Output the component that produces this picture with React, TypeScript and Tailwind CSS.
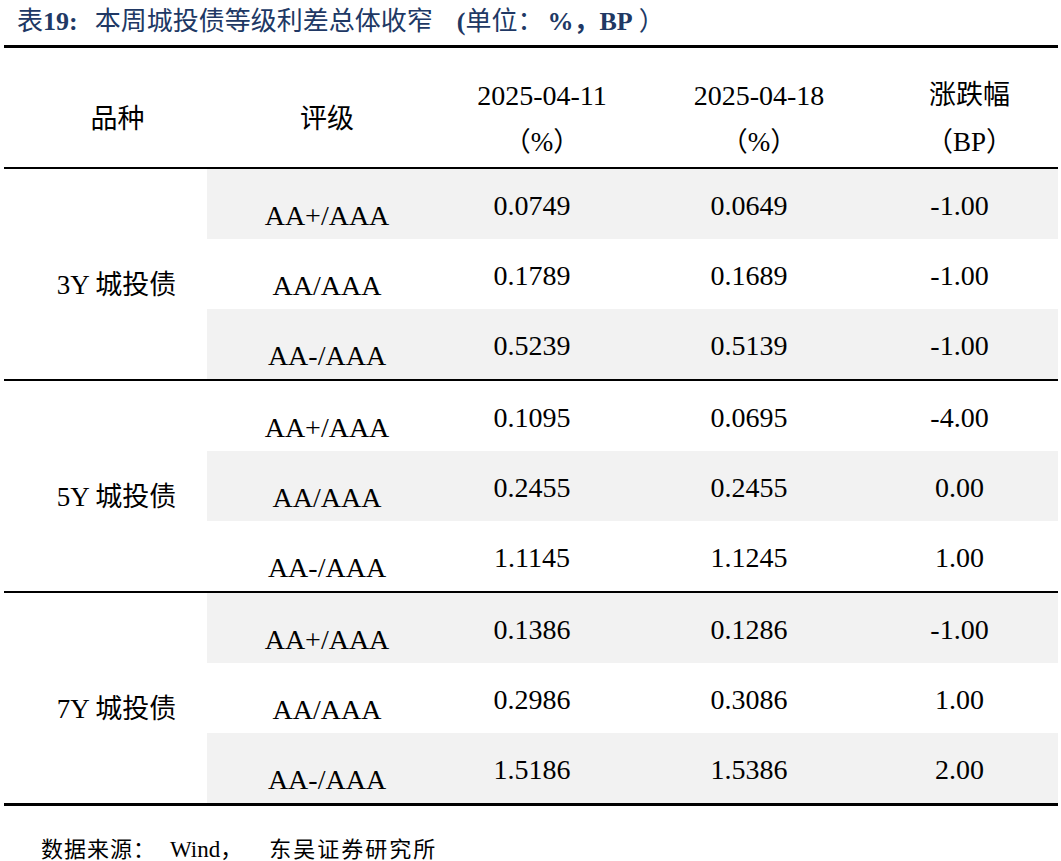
const FONT = "font-['Liberation_Serif','Noto_Sans_CJK_SC',serif]";

interface Row {
  grade: string;
  prev: string;
  curr: string;
  change: string;
}

interface Group {
  label: string;
  rows: Row[];
}

const GROUPS: Group[] = [
  {
    label: "3Y 城投债",
    rows: [
      { grade: "AA+/AAA", prev: "0.0749", curr: "0.0649", change: "-1.00" },
      { grade: "AA/AAA", prev: "0.1789", curr: "0.1689", change: "-1.00" },
      { grade: "AA-/AAA", prev: "0.5239", curr: "0.5139", change: "-1.00" },
    ],
  },
  {
    label: "5Y 城投债",
    rows: [
      { grade: "AA+/AAA", prev: "0.1095", curr: "0.0695", change: "-4.00" },
      { grade: "AA/AAA", prev: "0.2455", curr: "0.2455", change: "0.00" },
      { grade: "AA-/AAA", prev: "1.1145", curr: "1.1245", change: "1.00" },
    ],
  },
  {
    label: "7Y 城投债",
    rows: [
      { grade: "AA+/AAA", prev: "0.1386", curr: "0.1286", change: "-1.00" },
      { grade: "AA/AAA", prev: "0.2986", curr: "0.3086", change: "1.00" },
      { grade: "AA-/AAA", prev: "1.5186", curr: "1.5386", change: "2.00" },
    ],
  },
];

const COLS = "grid grid-cols-[240px_190px_244px_1fr]";

function DataRow({ row, shaded }: { row: Row; shaded: boolean }) {
  return (
    <div className={`${COLS} h-[70px] text-[28px] ${shaded ? "bg-[#f2f2f2]" : "bg-white"}`}>
      <div className="flex items-center justify-center pt-[24px]">{row.grade}</div>
      <div className="flex items-center justify-center pt-[4px] pr-[20px]">{row.prev}</div>
      <div className="flex items-center justify-center pt-[4px] pr-[20px]">{row.curr}</div>
      <div className="flex items-center justify-center pt-[4px] pr-[20px]">{row.change}</div>
    </div>
  );
}

export default function App() {
  return (
    <div className={`${FONT} w-[1061px] h-[861px] bg-white text-[27px] leading-none text-black overflow-hidden`}>
      {/* title */}
      <div className="h-[45px] pl-[17px] pt-[9px] text-[26px] text-[#203864] whitespace-nowrap">
        <span>表</span>
        <span className="font-bold">19:</span>
        <span className="ml-[17px]">本周城投债等级利差总体收窄</span>
        <span className="ml-[24px] font-bold">(</span>
        <span>单位：</span>
        <span className="ml-[4px] font-bold">%，BP</span>
        <span className="ml-[6px]">）</span>
      </div>

      <div className="ml-[4px] w-[1054px]">
        <div className="h-[3px] bg-black" />

        {/* header */}
        <div className="flex h-[119px]">
          <div className="w-[203px] flex items-center justify-center pl-[24px] pt-[23px]">品种</div>
          <div className={`${COLS} flex-1`}>
            <div className="flex items-center justify-center pt-[23px]">评级</div>
            <div className="flex flex-col items-center justify-center pt-[23px] leading-[47px]">
              <span className="text-[28px]">2025-04-11</span>
              <span>（%）</span>
            </div>
            <div className="flex flex-col items-center justify-center pt-[23px] leading-[47px]">
              <span className="text-[28px]">2025-04-18</span>
              <span>（%）</span>
            </div>
            <div className="flex flex-col items-center justify-center pt-[23px] leading-[47px]">
              <span>涨跌幅</span>
              <span>（BP）</span>
            </div>
          </div>
        </div>

        <div className="h-[2px] bg-black" />

        {GROUPS.map((g, gi) => (
          <div key={g.label}>
            <div className="flex">
              <div className="w-[203px] flex items-center justify-center pl-[22px] pt-[22px]">{g.label}</div>
              <div className="flex-1 flex flex-col">
                {g.rows.map((r, ri) => (
                  <DataRow key={r.grade} row={r} shaded={(gi * 3 + ri) % 2 === 0} />
                ))}
              </div>
            </div>
            <div className={gi === GROUPS.length - 1 ? "h-[3px] bg-black" : "h-[2px] bg-black"} />
          </div>
        ))}
      </div>

      {/* source */}
      <div className="mt-[32px] pl-[41px] text-[22px] tracking-[1px] whitespace-nowrap">
        <span>数据来源：</span>
        <span className="ml-[14px] text-[23px] tracking-normal">Wind</span>
        <span>，</span>
        <span className="ml-[26px] tracking-[2px]">东吴证券研究所</span>
      </div>
    </div>
  );
}
